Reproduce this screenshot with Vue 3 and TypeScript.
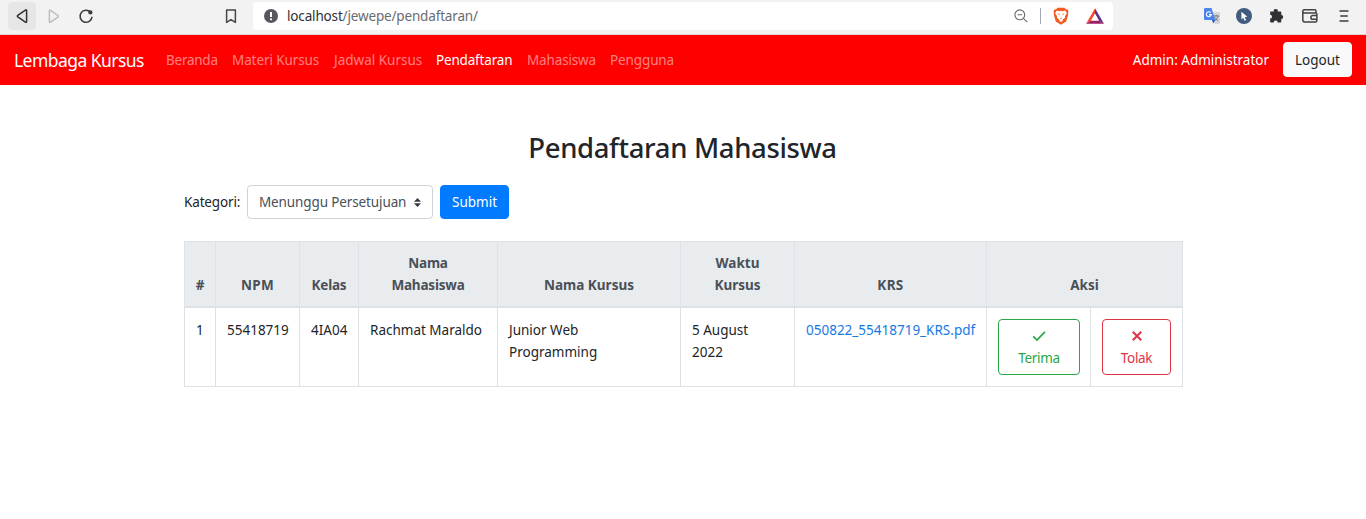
<script setup lang="ts">
import { ref } from 'vue'

interface Registration {
  npm: string
  kelas: string
  nama: string
  kursus: string
  waktu: string
  krs: string
}

const links = [
  { label: 'Beranda', size: 'beranda' },
  { label: 'Materi Kursus', size: 'materi' },
  { label: 'Jadwal Kursus', size: 'jadwal' },
  { label: 'Pendaftaran', size: 'daftar' },
  { label: 'Mahasiswa', size: 'mhs' },
  { label: 'Pengguna', size: 'user' },
]
const active = ref('Pendaftaran')

const rows: Registration[] = [
  {
    npm: '55418719',
    kelas: '4IA04',
    nama: 'Rachmat Maraldo',
    kursus: 'Junior Web Programming',
    waktu: '5 August 2022',
    krs: '050822_55418719_KRS.pdf',
  },
]
</script>

<template>
  <div class="page">
    <header class="browser">
      <span class="tool back">
        <svg width="28" height="28" viewBox="0 0 28 28"><path d="M18.6 8.7v10.8q0 1.3-1.2.6l-7.6-5.2q-1-.8 0-1.6l7.6-5.2q1.2-.7 1.2.6z" fill="none" stroke="#303134" stroke-width="1.5" /></svg>
      </span>
      <svg class="forward" width="20" height="28" viewBox="0 0 20 28"><path d="M5.4 9v10.6q0 1.3 1.2.6l7.3-5.1q1-.8 0-1.6L6.6 8.4Q5.400 7.700 5.400 9z" fill="none" stroke="#bcbcbe" stroke-width="1.5" /></svg>
      <svg class="reload" width="20" height="28" viewBox="0 0 20 28"><path d="M14.6 10.400A6 6 0 1 0 16 14.8" fill="none" stroke="#3b3c3f" stroke-width="1.6" /><circle cx="14.4" cy="10.4" r="2.1" fill="#3b3c3f" /></svg>
      <svg class="bookmark" width="14" height="28" viewBox="0 0 14 28"><path d="M2.600 8h8.8v12.400L7 17.600l-4.400 2.800z" fill="none" stroke="#46474a" stroke-width="1.5" stroke-linejoin="round" /></svg>
      <div class="address">
        <svg class="info" width="14" height="14" viewBox="0 0 14 14"><circle cx="7" cy="7" r="7" fill="#55585c" /><path d="M7 3v4.9" stroke="#fff" stroke-width="2" /><circle cx="7" cy="10.3" r="1.1" fill="#fff" /></svg>
        <span class="url"><b>localhost</b>/jewepe/pendaftaran/</span>
        <svg class="lens" width="14" height="14" viewBox="0 0 14 14" fill="none" stroke="#66686c" stroke-width="1.1"><circle cx="5.8" cy="5.8" r="4.9" /><path d="M9.4 9.4l3.9 3.8M3.5 5.8h4.6" /></svg>
        <span class="divider"></span>
        <svg class="lion" width="16" height="18" viewBox="0 0 18 20">
          <path d="M5 .8h8l1.700 1.8 1.600-.1 1.100 2.500-.5 1.600.2 1.800-2.200 7.700L9 19.8l-5.900-3.700L.9 8.400l.2-1.800L.6 5l1.100-2.500 1.600.1z" fill="#f25a20" />
          <path d="M4.300 3.900l2.800.7L9 4l1.900.6 2.800-.7 1.900 3-2.200 3.500.2 1.700-2.500 1.900-.4 1.500L9 16.700l-1.700-1.200-.4-1.500-2.500-1.900.2-1.700-2.200-3.500z" fill="#fff" />
          <path d="M4.900 7.200l2.900.5-.9 1.200zM13.100 7.200l-2.900.5.9 1.200zM7.500 12.400h3L9 13.600z" fill="#f25a20" />
        </svg>
        <svg class="bat" width="18" height="16" viewBox="0 0 18 16">
          <path d="M9 .3L0 15.7l5.1-3.3L9 5.8z" fill="#f2502f" />
          <path d="M9 .3l9 15.400-5.100-3.300L9 5.800z" fill="#662d91" />
          <path d="M0 15.7h18l-5.100-3.300H5.100z" fill="#9e1f63" />
          <path d="M9 5.800l3.900 6.600H5.100z" fill="#fff" />
        </svg>
      </div>
      <svg class="translate" width="17" height="16" viewBox="0 0 17 16">
        <path d="M6 4h9q1 0 1 1v10q0 1-1 1h-4z" fill="#d5d7da" />
        <path d="M9.300 8h5.800M12.200 6.800V8M14 8.200c-.7 2.200-2 3.500-3.600 4.300M10.600 9.200c.8 1.700 2 2.800 3.700 3.500" fill="none" stroke="#6f767b" stroke-width="1" />
        <path d="M1 0h6.500l3.700 12H1q-1 0-1-1V1q0-1 1-1z" fill="#4b84ee" />
        <path d="M7.800 12h3.400L9.400 15.600z" fill="#2858bd" />
        <path d="M6.700 4.700A2.400 2.400 0 1 0 7.200 6.600H5" fill="none" stroke="#fff" stroke-width="1.1" />
      </svg>
      <svg class="pointer" width="16" height="16" viewBox="0 0 16 16"><circle cx="8" cy="8" r="8" fill="#425c7f" /><path d="M5.400 3.700l6 5.100-2.800.3 1.500 3-1.500.7-1.400-3-1.800 1.800z" fill="#fff" /></svg>
      <svg class="puzzle" width="15" height="15" viewBox="0 0 15 15"><path d="M1.300 3.400h3.500A2 2 0 1 1 8.700 3.400h2.600q1 0 1 1v2.700a1.900 1.900 0 1 1 0 3.900v2.600q0 1-1 1H8.700a2 2 0 0 0-4 0H2.100q-1 0-1-1v-3a1.900 1.900 0 0 0 0-3.800z" fill="#303134" /></svg>
      <svg class="wallet" width="16" height="14" viewBox="0 0 16 14" fill="none" stroke="#414246" stroke-width="1.5"><path d="M14 4V2.100q0-1.300-1.200-1.300H2.300Q.8.8.8 2.300v8.800q0 1.800 1.800 1.800h10.800q1.500 0 1.500-1.500V5.100q0-1.100-1.200-1.100H2.400Q1 4 .8 2.600" /><path d="M15 6.500h-4.200a1.900 1.900 0 0 0 0 3.800H15" /></svg>
      <svg class="menu" width="10" height="12" viewBox="0 0 10 12"><path d="M.5 1h9M1.200 6h7.600M.5 11h9" stroke="#3c3d40" stroke-width="1.500" /></svg>
    </header>

    <nav class="navbar">
      <a class="brand">Lembaga Kursus</a>
      <a v-for="link in links" :key="link.label" class="link" :class="[link.size, { active: active === link.label }]" @click="active = link.label">{{ link.label }}</a>
      <span class="admin">Admin: Administrator</span>
      <button class="logout">Logout</button>
    </nav>

    <main>
      <h1>Pendaftaran Mahasiswa</h1>
      <form class="filter" @submit.prevent>
        <label>Kategori:</label>
        <div class="select">
          <span>Menunggu Persetujuan</span>
          <svg width="7" height="9" viewBox="0 0 7 9"><path d="M0 3.800L3.500 0 7 3.800zM0 5.200L3.500 9 7 5.200z" fill="#343a40" /></svg>
        </div>
        <button class="submit">Submit</button>
      </form>

      <table>
        <colgroup>
          <col class="c-no" /><col class="c-npm" /><col class="c-kelas" /><col class="c-nama" /><col class="c-kursus" /><col class="c-waktu" /><col class="c-krs" /><col class="c-yes" /><col class="c-nope" />
        </colgroup>
        <thead>
          <tr>
            <th>#</th>
            <th class="wide">NPM</th>
            <th class="tight">Kelas</th>
            <th class="tight">Nama<br />Mahasiswa</th>
            <th>Nama Kursus</th>
            <th>Waktu<br />Kursus</th>
            <th class="wide">KRS</th>
            <th colspan="2">Aksi</th>
          </tr>
        </thead>
        <tbody>
          <tr v-for="(row, i) in rows" :key="row.npm">
            <td>{{ i + 1 }}</td>
            <td>{{ row.npm }}</td>
            <td>{{ row.kelas }}</td>
            <td>{{ row.nama }}</td>
            <td class="kursus">{{ row.kursus }}</td>
            <td class="waktu">{{ row.waktu }}</td>
            <td><a class="file">{{ row.krs }}</a></td>
            <td>
              <button class="action accept">
                <svg width="14" height="14" viewBox="0 0 14 14"><path d="M1.200 7.400l3.700 3.600 8-8.100" fill="none" stroke="currentColor" stroke-width="1.700" /></svg>
                <span>Terima</span>
              </button>
            </td>
            <td>
              <button class="action reject">
                <svg width="14" height="14" viewBox="0 0 14 14"><path d="M2.800 2.800l8.400 8.400M11.200 2.800l-8.400 8.400" fill="none" stroke="currentColor" stroke-width="2" /></svg>
                <span>Tolak</span>
              </button>
            </td>
          </tr>
        </tbody>
      </table>
    </main>
  </div>
</template>

<style>
body { background: #fff; overflow: hidden; }
</style>

<style scoped>
.page { height: 519px; font-family: "Noto Sans", "Open Sans", sans-serif; font-size: 13.5px; line-height: 22px; color: #212529; white-space: nowrap; }
.page * { box-sizing: border-box; }
svg { display: block; flex: none; }
button { font: inherit; padding: 0; border-radius: 4px; border: 1px solid; }

.browser { display: flex; align-items: center; height: 35px; padding: 0 0 3px 8px; background: #f2f2f2; border-bottom: 1px solid #dfd5d5; }
.back { width: 28px; height: 28px; border-radius: 4px; background: #e6e6e6; }
.forward { margin-left: 8px; }
.reload { margin-left: 12px; }
.bookmark { margin-left: 128px; }
.address { display: flex; align-items: center; width: 860px; height: 28px; margin-left: 15px; padding-left: 11px; background: #fff; border-radius: 4px; }
.url { flex: 1; margin-left: 9px; letter-spacing: -.16px; color: #6a6c70; }
.url b { font-weight: 400; color: #2e3033; }
.divider { width: 1px; height: 16px; margin: 0 12px 0 12px; background: #a3aab3; }
.lion { margin-right: 17px; }
.bat { margin-right: 9px; }
.translate { margin-left: 91px; }
.pointer { margin-left: 15px; }
.puzzle { margin-left: 17px; }
.wallet { margin-left: 18px; }
.menu { margin-left: 21px; }

.navbar { display: flex; align-items: center; height: 50px; padding: 0 14px; background: #f00; color: #fff; }
.brand { width: 152px; font-size: 17.5px; letter-spacing: -.55px; }
.link { color: rgba(255, 255, 255, .5); }
.link.active { color: #fff; }
.beranda { width: 66px; letter-spacing: -.25px; }
.materi { width: 102px; letter-spacing: -.1px; }
.jadwal { width: 102px; }
.daftar { width: 91px; letter-spacing: -.18px; }
.mhs { width: 83px; letter-spacing: -.15px; }
.user { letter-spacing: -.12px; }
.admin { margin-left: auto; }
.logout { width: 69px; height: 35px; margin: 0 0 1px 14px; background: #f8f9fa; border-color: #f8f9fa; color: #212529; }

main { width: 999px; margin-left: 184px; padding-top: 44px; }
h1 { margin: 0; height: 56px; padding-right: 2px; line-height: 37px; font-size: 27.5px; font-weight: 500; letter-spacing: -.36px; text-align: center; }
.filter { display: flex; align-items: center; height: 34px; }
label { width: 63px; letter-spacing: -.15px; }
.select { display: flex; align-items: center; justify-content: space-between; width: 186px; height: 34px; padding: 0 11px; border: 1px solid #ced4da; border-radius: 4px; color: #495057; letter-spacing: -.12px; }
.submit { width: 69px; height: 34px; margin-left: 7px; color: #fff; background: #007bff; border-color: #007bff; }

table { width: 999px; margin-top: 22px; table-layout: fixed; border-collapse: separate; border-spacing: 0; border-right: 1px solid #dee2e6; border-bottom: 1px solid #dee2e6; }
.c-no { width: 31px; }
.c-npm { width: 84px; }
.c-kelas { width: 59px; }
.c-nama { width: 139px; }
.c-kursus { width: 183px; }
.c-waktu { width: 114px; }
.c-krs { width: 192px; }
.c-yes { width: 104px; }
.c-nope { width: 92px; }
th { height: 67px; padding: 0 10px 10px; vertical-align: bottom; font-weight: 700; color: #495057; background: #e9ecef; border: solid #dee2e6; border-width: 1px 0 2px 1px; }
.tight { letter-spacing: -.2px; }
.wide { letter-spacing: .35px; }
td { height: 78px; padding: 11px 11px 0; vertical-align: top; border-left: 1px solid #dee2e6; }
td.kursus { white-space: normal; padding-right: 60px; }
td.waktu { white-space: normal; padding-right: 30px; }
.file { color: #1679e6; }
.action { display: flex; flex-direction: column; align-items: center; height: 56px; padding-top: 9px; background: #fff; border-color: currentColor; letter-spacing: -.3px; }
.action span { margin-top: 4px; }
.accept { width: 82px; color: #28a745; }
.reject { width: 69px; color: #dc3545; }
</style>
